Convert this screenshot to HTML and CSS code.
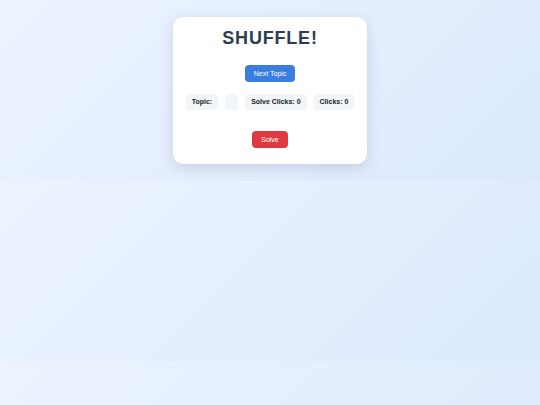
FILE: index.html
```html
<!DOCTYPE html>
<html lang="en">
<head>
<meta charset="utf-8">
<title>Shuffle!</title>
<link rel="stylesheet" href="styles.css">
</head>
<body>
  <main class="card">
    <h1 class="title">SHUFFLE!</h1>
    <button class="btn btn-blue">Next Topic</button>
    <div class="stats">
      <span class="pill">Topic:</span>
      <span class="pill pill-empty"></span>
      <span class="pill">Solve Clicks: 0</span>
      <span class="pill">Clicks: 0</span>
    </div>
    <div class="word"></div>
    <button class="btn btn-red">Solve</button>
  </main>
</body>
</html>
```

FILE: styles.css
```css
body {
  margin: 0;
  padding: 17px 0 17px;
  font-family: "Liberation Sans", Arial, sans-serif;
  background: linear-gradient(135deg, #ecf3ff 0%, #dceafc 100%);
}

.card {
  width: 194px;
  box-sizing: border-box;
  margin: 0 auto;
  background: #ffffff;
  border-radius: 10px;
  box-shadow: 0 4px 14px rgba(40, 60, 100, 0.16);
  padding: 10px 0 16px;
  display: flex;
  flex-direction: column;
  align-items: center;
}

.title {
  margin: 0;
  font-size: 18px;
  line-height: 22px;
  font-weight: 700;
  letter-spacing: 0.8px;
  color: #2c3e50;
}

.btn {
  border: none;
  border-radius: 4px;
  color: #ffffff;
  font-family: "Liberation Sans", Arial, sans-serif;
  font-size: 7px;
  height: 17px;
  padding: 0 9px;
  line-height: 17px;
}

.btn-blue {
  margin-top: 16px;
  background: #3a7ddf;
}

.btn-red {
  background: #dc3b3f;
}

.stats {
  margin-top: 12px;
  display: flex;
  gap: 7px;
}

.pill {
  height: 16px;
  line-height: 16px;
  padding: 0 6px;
  border-radius: 4px;
  background: #f3f6f9;
  font-size: 7px;
  font-weight: 700;
  color: #1a1a1a;
}

.pill-empty {
  width: 13px;
  padding: 0;
}

.word {
  height: 21px;
}
```
